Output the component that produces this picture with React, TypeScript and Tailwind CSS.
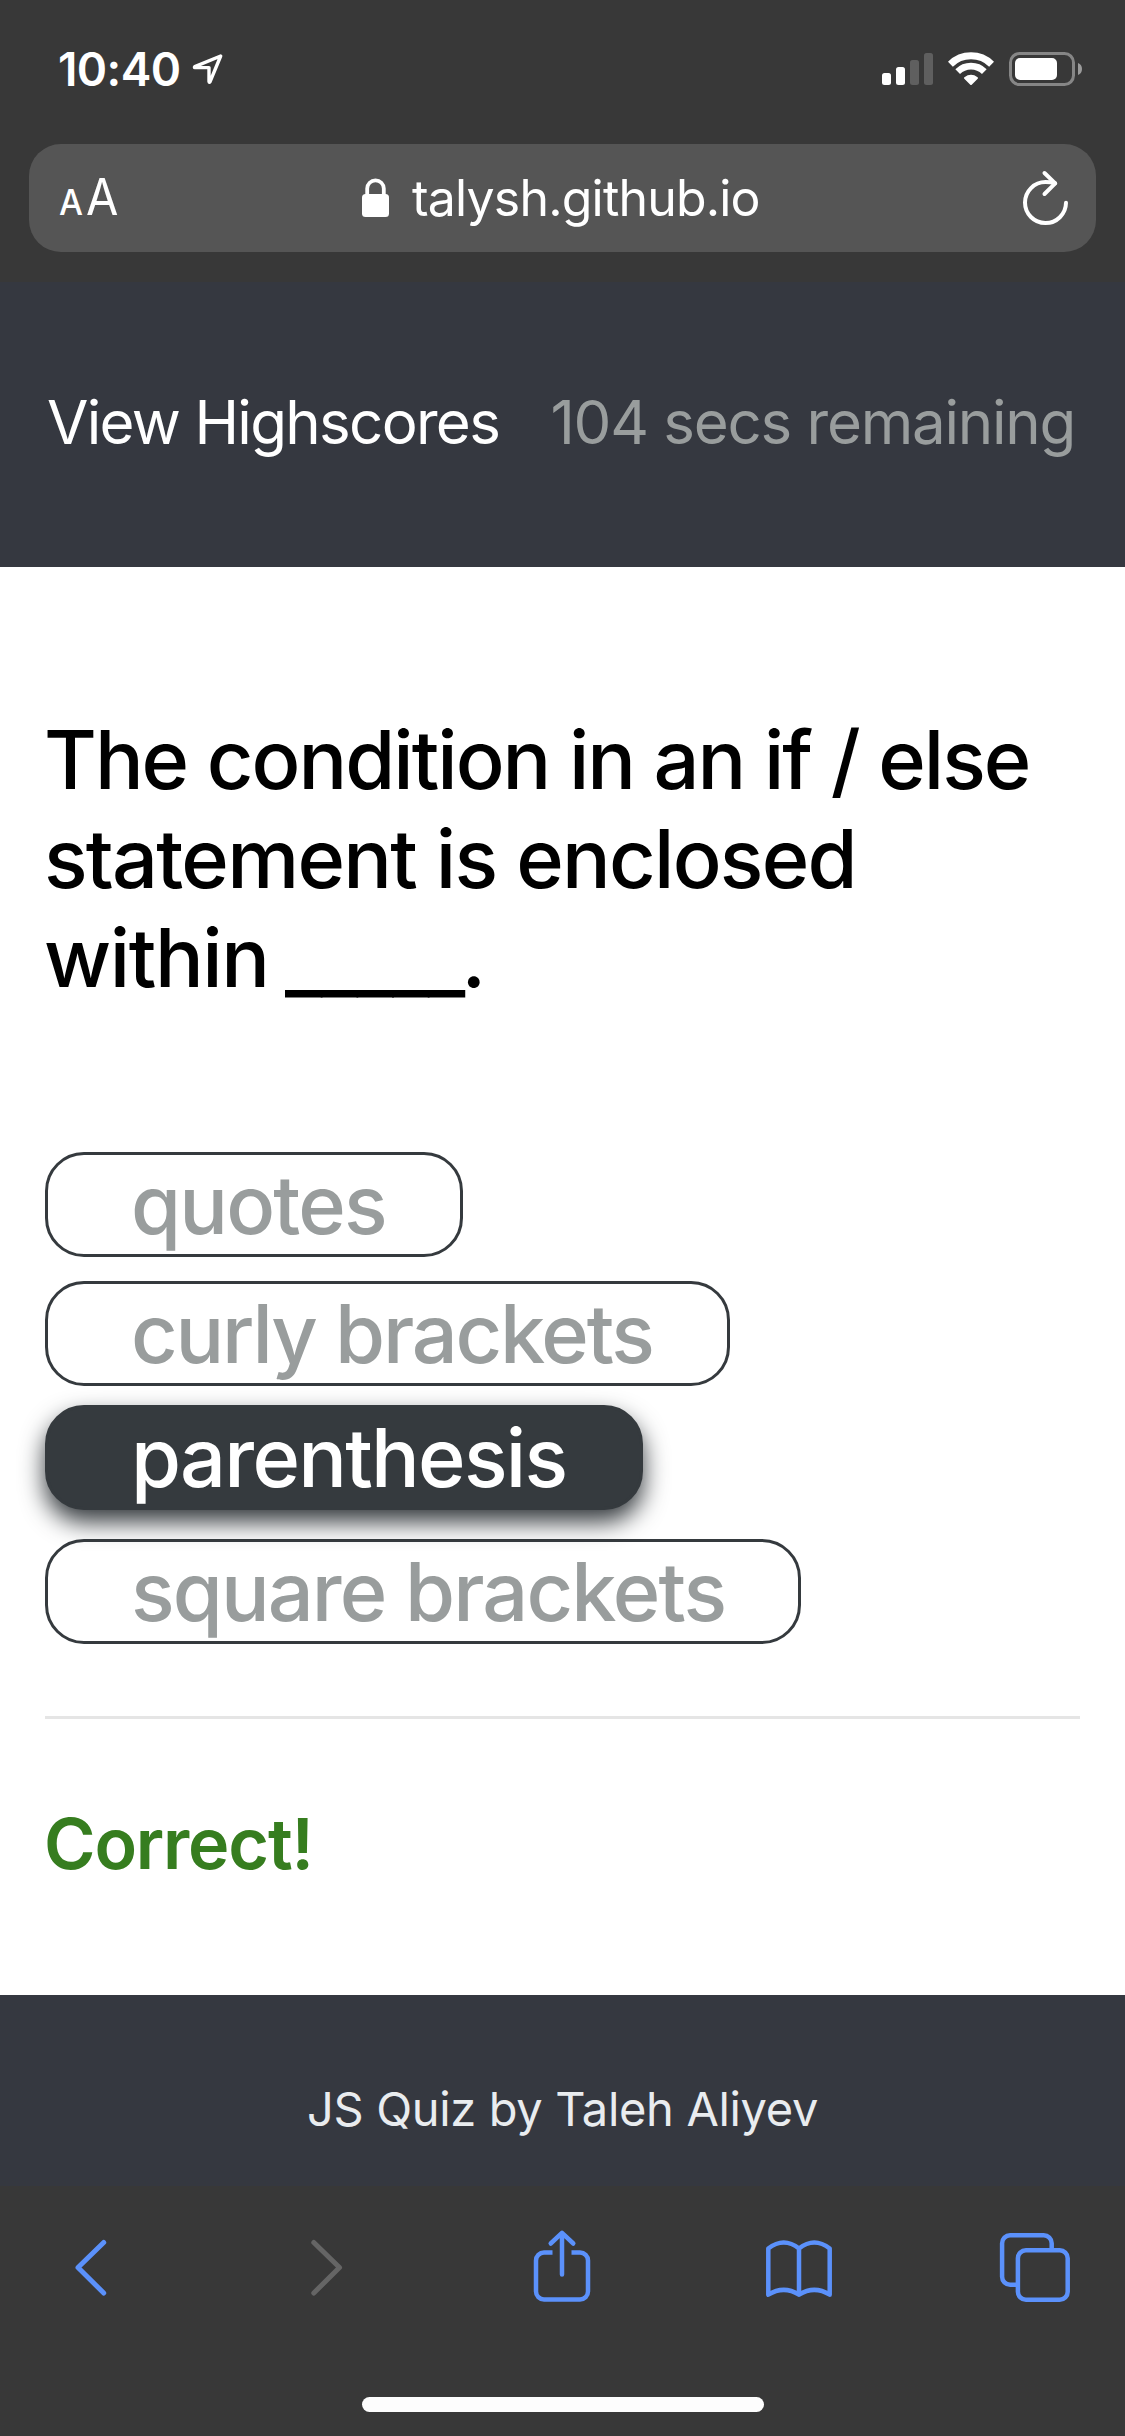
import type { ReactNode } from 'react';

function LocationIcon() {
  return (
    <svg width="34" height="34" viewBox="0 0 34 34" className="mt-[52px] ml-[11px]" fill="none" stroke="#fff" strokeWidth="3.4" strokeLinejoin="round">
      <path d="M29.7 4 3.8 14.6Q3 15.5 4 15.6H18V29.6Q18.2 31 19 29.8Z" />
    </svg>
  );
}

function SignalIcon() {
  return (
    <svg width="51" height="33" viewBox="0 0 51 33" className="mt-[52px]">
      <rect x="0" y="21" width="9" height="12" rx="2.5" fill="#fff" />
      <rect x="14" y="15" width="9" height="18" rx="2.5" fill="#fff" />
      <rect x="28" y="8" width="9" height="25" rx="2.5" fill="#5f5f5f" />
      <rect x="42" y="1" width="9" height="32" rx="2.5" fill="#5f5f5f" />
    </svg>
  );
}

function WifiIcon() {
  return (
    <svg width="46" height="34" viewBox="0 0 46 34" className="mt-[52px] ml-[15px]" fill="none" stroke="#fff">
      <path d="M2.4 12.2A29.4 29.4 0 0 1 43.6 12.2" strokeWidth="7" />
      <path d="M9.7 19.6A18.8 18.8 0 0 1 36.3 19.6" strokeWidth="6.6" />
      <path d="M23 32 17 26Q23 21.5 29 26Z" fill="#fff" strokeWidth="2" strokeLinejoin="round" />
    </svg>
  );
}

function BatteryIcon() {
  return (
    <svg width="74" height="34" viewBox="0 0 74 34" className="mt-[52px] ml-[15px]">
      <rect x="1.5" y="1.5" width="63" height="31" rx="9" fill="none" stroke="#868686" strokeWidth="3" />
      <rect x="6" y="6" width="42" height="22" rx="5" fill="#fff" />
      <path d="M69 11Q73 12.5 73 17T69 23Z" fill="#9b9b9b" />
    </svg>
  );
}

function StatusBar() {
  return (
    <div className="flex h-[144px] shrink-0 items-start pr-[42px] pl-[58px]">
      <span className="mt-[44px] text-[46px] leading-[50px] font-semibold tracking-[-0.6px]">10:40</span>
      <LocationIcon />
      <div className="ml-auto flex">
        <SignalIcon />
        <WifiIcon />
        <BatteryIcon />
      </div>
    </div>
  );
}

function AddressBar() {
  return (
    <div className="mx-[29px] flex h-[108px] shrink-0 items-center rounded-[32px] bg-[#555] pr-[26px] pl-[30px]">
      <span className="flex w-[303px] items-baseline pt-[3px] leading-[60px]">
        <span className="w-[27px] origin-left scale-x-[0.94] text-[36px] font-medium">A</span>
        <span className="origin-left scale-x-[0.92] text-[51px]">A</span>
      </span>
      <svg width="27" height="39" viewBox="0 0 27 39" className="mt-[34px] shrink-0 self-start">
        <path d="M5.2 18V10.6a8.3 8.3 0 0 1 16.6 0V18" fill="none" stroke="#fff" strokeWidth="3.8" />
        <rect x="0" y="16" width="27" height="23" rx="3.5" fill="#fff" />
      </svg>
      <span className="ml-[23px] text-[50px] leading-[60px] tracking-[-0.82px]">talysh.github.io</span>
      <svg width="50" height="58" viewBox="0 0 50 58" className="mt-[26px] ml-auto self-start" fill="none" stroke="#fff" strokeWidth="4" strokeLinecap="round" strokeLinejoin="round">
        <path d="M46 32.8A20.5 20.5 0 1 1 25.5 12.1Q30.5 12.1 35 13.3" />
        <path d="M24.5 3 35.2 13.4 24.5 24" />
      </svg>
    </div>
  );
}

const options = [
  { label: 'quotes', box: 'w-[418px]', text: 'tracking-[-1.8px]' },
  { label: 'curly brackets', box: 'w-[685px]', text: 'tracking-[-2.2px]' },
  { label: 'parenthesis', box: 'w-[598px]', text: 'tracking-[-1.75px]', active: true },
  { label: 'square brackets', box: 'w-[756px]', text: 'tracking-[-1.9px]' },
];

function Option({ label, box, text, active }: { label: string; box: string; text: string; active?: boolean }) {
  const look = active
    ? 'bg-[#353a3e] text-white -translate-y-[5px] shadow-[0_12px_24px_#353a3e]'
    : 'text-[#999d9d]';
  return (
    <button
      className={`h-[105px] ${box} ${look} flex items-start rounded-[39px] border-[3px] border-[#353a3e] pl-[83px] text-[81px] leading-[100px] font-medium whitespace-nowrap`}
    >
      <span className={text}>{label}</span>
    </button>
  );
}

function Tool({ children, color = '#5b91fb' }: { children: ReactNode; color?: string }) {
  return (
    <div className="flex justify-center">
      <svg width="80" height="80" viewBox="0 0 80 80" fill="none" stroke={color} strokeWidth="4.5" strokeLinecap="round" strokeLinejoin="round">
        {children}
      </svg>
    </div>
  );
}

function Toolbar() {
  return (
    <div className="flex h-[250px] flex-col items-center overflow-hidden">
      <div className="mt-[42px] grid w-[1179px] shrink-0 grid-cols-5">
        <Tool>
          <path d="M52.7 14.5 27 39.5 52.7 65" strokeWidth="5" />
        </Tool>
        <Tool color="#656565">
          <path d="M26.8 14.5 52.5 39.5 26.8 65" strokeWidth="5" />
        </Tool>
        <Tool>
          <path d="M30.5 24.5H22a8 8 0 0 0-8 8V63.5a8 8 0 0 0 8 8H58a8 8 0 0 0 8-8V32.5a8 8 0 0 0-8-8H49.5" strokeLinecap="butt" />
          <path d="M40 5V46.5M28.700 15.5 40 4.8 51.3 15.5" />
        </Tool>
        <Tool>
          <path d="M10.300 66.7V20.5Q25.800 8.5 41 20.5Q56.300 8.5 71.7 20.5V66.7Q56.300 57 41 66.7Q25.800 57 10.300 66.7ZM41 20.5V66.7" />
        </Tool>
        <Tool>
          <path d="M57.7 22V15.2a8 8 0 0 0-8-8H16.1a8 8 0 0 0-8 8V48.8a8 8 0 0 0 8 8H24" strokeLinecap="butt" />
          <rect x="23.9" y="22.2" width="49.8" height="49.6" rx="8" />
        </Tool>
      </div>
      <div className="mt-[89px] h-[15px] w-[402px] shrink-0 rounded-full bg-[#fdfdfd]" />
    </div>
  );
}

export default function App() {
  return (
    <div className="flex h-[2436px] w-[1125px] flex-col overflow-hidden bg-[#383838] font-['Inter',sans-serif] text-white">
      <div className="flex h-[282px] shrink-0 flex-col">
        <StatusBar />
        <AddressBar />
      </div>

      <header className="flex h-[285px] shrink-0 items-start justify-between bg-[#353840] pt-[104px] pr-[50px] pl-[47px] text-[60px] leading-[72px] whitespace-nowrap">
        <a className="tracking-[-1.68px]">View Highscores</a>
        <span className="tracking-[-1.24px] text-[#999d9d]">104 secs remaining</span>
      </header>

      <main className="flex h-[1428px] shrink-0 flex-col bg-white px-[45px] pt-[144px]">
        <h1 className="-ml-px text-[81px] leading-[99px] font-medium whitespace-nowrap text-black">
          <span className="block tracking-[-2px]">The condition in an if / else</span>
          <span className="block tracking-[-1.75px]">statement is enclosed</span>
          <span className="flex">
            <span className="w-[241px] tracking-[-1.43px]">within</span>
            <span className="relative top-[3px] tracking-[-1.8px]">_____</span>
            <span className="-ml-0.5">.</span>
          </span>
        </h1>
        <div className="mt-[144px] flex flex-col gap-[24px]">
          {options.map((o) => (
            <Option key={o.label} {...o} />
          ))}
        </div>
        <hr className="mt-[72px] border-t-[3px] border-[#e5e5e5]" />
        <p className="mt-[83px] -ml-px text-[70px] leading-[84px] font-semibold tracking-[-1.2px] text-[#367d1f]">Correct!</p>
      </main>

      <footer className="h-[191px] shrink-0 bg-[#353840] pt-[86px] text-center text-[47px] leading-[56px] tracking-[-0.33px] text-[#e9ecef]">
        JS Quiz by Taleh Aliyev
      </footer>

      <Toolbar />
    </div>
  );
}
